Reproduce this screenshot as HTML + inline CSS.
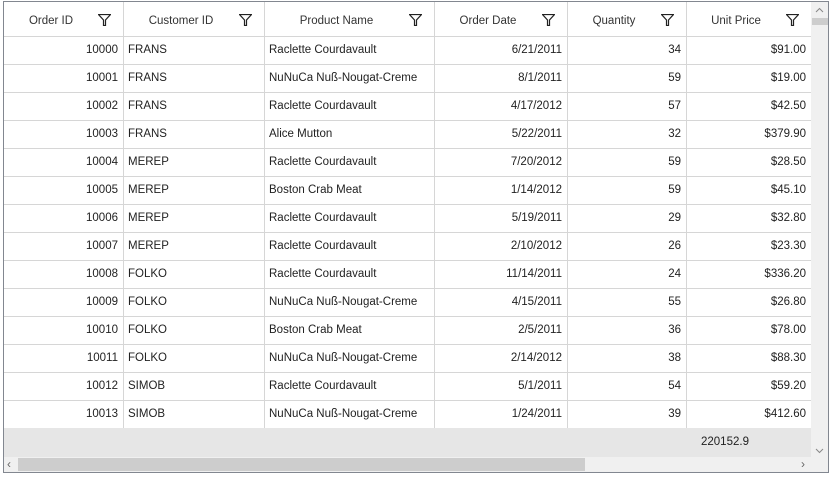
<!DOCTYPE html><html><head><style>
*{margin:0;padding:0;box-sizing:border-box}
body{width:831px;height:478px;background:#fff;font-family:"Liberation Sans",sans-serif;font-size:11.5px;color:#222;position:relative;overflow:hidden}
.frame{position:absolute;left:3px;top:1px;width:826px;height:472px;border:1px solid #828790}
.c{position:absolute;height:29px;line-height:29px;border-right:1px solid #d6d6d6;border-bottom:1px solid #d6d6d6;padding:0 5px;white-space:nowrap;overflow:hidden}
.h{position:absolute;top:2px;height:35px;line-height:38px;border-right:1px solid #d6d6d6;border-bottom:1px solid #d6d6d6;color:#333;white-space:nowrap}
.h span{position:absolute;top:0}
.h svg{position:absolute;top:12px}
.r{text-align:right}
</style></head><body>
<div class="frame"></div>
<div id="g"></div>
<div style="position:absolute;left:4px;top:428px;width:807px;height:29px;background:#e6e6e6"></div>
<div style="position:absolute;left:701px;top:428px;line-height:29px;color:#222">220152.9</div>
<div style="position:absolute;left:4px;top:457px;width:807px;height:15px;background:#f0f0f0"></div>
<div style="position:absolute;left:18px;top:458px;width:567px;height:13px;background:#cdcdcd"></div>
<div style="position:absolute;left:7px;top:458px;font-size:12px;color:#666;line-height:13px">‹</div>
<div style="position:absolute;left:801px;top:458px;font-size:12px;color:#666;line-height:13px">›</div>
<div style="position:absolute;left:811px;top:2px;width:17px;height:455px;background:#f0f0f0"></div>
<div style="position:absolute;left:812px;top:18px;width:16px;height:7px;background:#cdcdcd"></div>
<div style="position:absolute;left:811px;top:457px;width:17px;height:15px;background:#f0f0f0"></div>
<svg style="position:absolute;left:815px;top:7px" width="9" height="6"><path d="M1 5 L4.5 1.5 L8 5" fill="none" stroke="#888" stroke-width="1"/></svg>
<svg style="position:absolute;left:815px;top:448px" width="9" height="6"><path d="M1 1 L4.5 4.5 L8 1" fill="none" stroke="#888" stroke-width="1"/></svg>
<script>
const cols=[[4,123],[123,264],[264,434],[434,567],[567,686],[686,811]];
const heads=["Order ID","Customer ID","Product Name","Order Date","Quantity","Unit Price"];
const data=[["10000","FRANS","Raclette Courdavault","6/21/2011","34","$91.00"],
["10001","FRANS","NuNuCa Nuß-Nougat-Creme","8/1/2011","59","$19.00"],
["10002","FRANS","Raclette Courdavault","4/17/2012","57","$42.50"],
["10003","FRANS","Alice Mutton","5/22/2011","32","$379.90"],
["10004","MEREP","Raclette Courdavault","7/20/2012","59","$28.50"],
["10005","MEREP","Boston Crab Meat","1/14/2012","59","$45.10"],
["10006","MEREP","Raclette Courdavault","5/19/2011","29","$32.80"],
["10007","MEREP","Raclette Courdavault","2/10/2012","26","$23.30"],
["10008","FOLKO","Raclette Courdavault","11/14/2011","24","$336.20"],
["10009","FOLKO","NuNuCa Nuß-Nougat-Creme","4/15/2011","55","$26.80"],
["10010","FOLKO","Boston Crab Meat","2/5/2011","36","$78.00"],
["10011","FOLKO","NuNuCa Nuß-Nougat-Creme","2/14/2012","38","$88.30"],
["10012","SIMOB","Raclette Courdavault","5/1/2011","54","$59.20"],
["10013","SIMOB","NuNuCa Nuß-Nougat-Creme","1/24/2011","39","$412.60"]];
let h="";
const filt='<svg width="13" height="12"><path d="M0.5 0.5 H12.5 L7.5 6 V11.5 H5.5 V6 Z" fill="none" stroke="#222" stroke-width="1.2"/></svg>';
cols.forEach((c,i)=>{const w=c[1]-c[0];
h+=`<div class="h" style="left:${c[0]}px;width:${w+1}px"><span style="left:0;width:${w-25}px;text-align:center">${heads[i]}</span><div style="position:absolute;left:${w-25}px;top:0">${filt}</div></div>`;});
data.forEach((r,j)=>{const y=36+j*28;r.forEach((v,i)=>{const c=cols[i];const right=[0,3,4,5].includes(i);
h+=`<div class="c${right?' r':''}" style="left:${c[0]}px;top:${y}px;width:${c[1]-c[0]+1}px">${v}</div>`;});});
document.getElementById("g").innerHTML=h;
</script>
</body></html>
